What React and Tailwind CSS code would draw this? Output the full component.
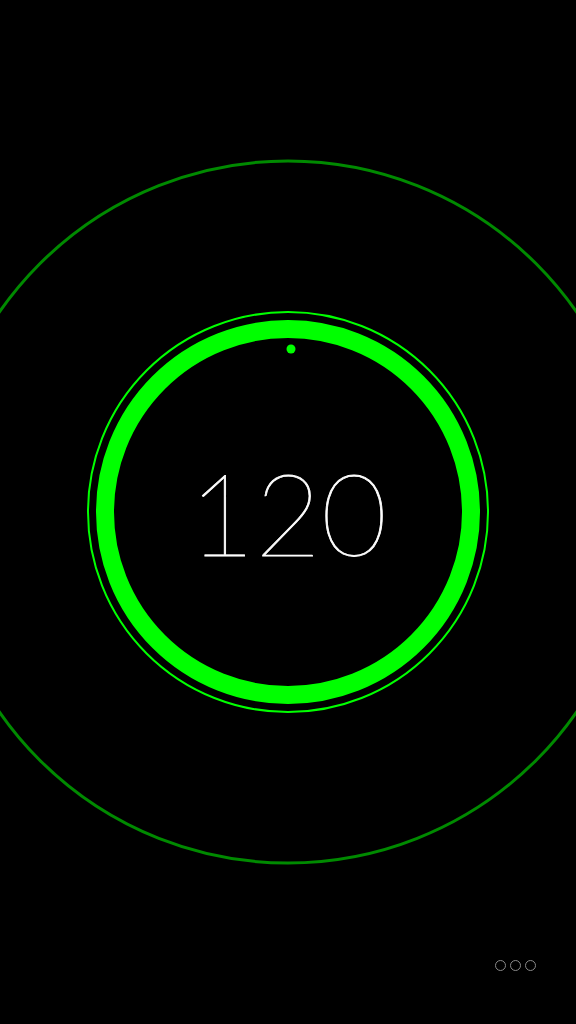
import React from 'react'

function Gauge({ value }) {
    return (
        <div className="relative w-full h-full">
            <svg className="absolute inset-0" width="576" height="1024" viewBox="0 0 576 1024">
                <circle cx="288" cy="512" r="351" fill="none" stroke="#008a00" strokeWidth="3" />
                <circle cx="288" cy="512" r="200" fill="none" stroke="#00ff00" strokeWidth="2" />
                <circle cx="288" cy="512" r="183" fill="none" stroke="#00ff00" strokeWidth="18" />
                <circle cx="291" cy="349" r="4.5" fill="#00ff00" />
            </svg>
            <div className="absolute inset-0 flex items-center justify-center">
                <span className="text-white font-thin text-[114px] leading-none [-webkit-text-stroke:0.8px_white]" style={{ fontFamily: 'Lato, "Liberation Sans", sans-serif' }}>
                    {value}
                </span>
            </div>
        </div>
    )
}

function App() {
    return (
        <div className="w-[576px] h-[1024px] bg-black overflow-hidden flex flex-col">
            <div className="flex-1 relative">
                <Gauge value={120} />
            </div>
            <div className="absolute left-0 top-0 w-[576px] h-[1024px] pointer-events-none flex items-end justify-end pr-[40px] pb-[53px]">
                <div className="flex gap-[4px]">
                    <span className="w-[11px] h-[11px] rounded-full border-[1.5px] border-[#8a8a8a]"></span>
                    <span className="w-[11px] h-[11px] rounded-full border-[1.5px] border-[#8a8a8a]"></span>
                    <span className="w-[11px] h-[11px] rounded-full border-[1.5px] border-[#8a8a8a]"></span>
                </div>
            </div>
        </div>
    )
}

export default App;
